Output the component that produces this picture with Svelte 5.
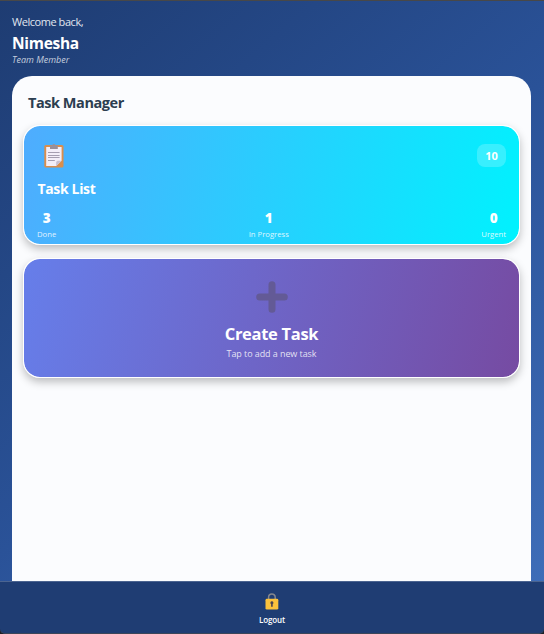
<script>
  const stats = [
    { value: 3, label: 'Done', name: 'done' },
    { value: 1, label: 'In Progress', name: 'progress' },
    { value: 0, label: 'Urgent', name: 'urgent' }
  ];
</script>

<div class="app">
  <header>
    <div class="welcome">Welcome back,</div>
    <div class="name">Nimesha</div>
    <div class="role">Team Member</div>
  </header>

  <main>
    <h1>Task Manager</h1>
    <section class="card list">
      <div class="top">
        <svg class="clip" width="20" height="24" viewBox="0 0 20 24">
          <rect x="0.3" y="1" width="19.2" height="22.6" rx="1.6" fill="#d98e4d" />
          <path d="M2.2 3H17.6V16.8L12.2 22H2.2Z" fill="#f3eef8" />
          <path d="M12.2 22V18.4Q12.2 16.8 13.8 16.8H17.6Z" fill="#c9bfd0" />
          <path d="M6 1.5H8Q8.4 0 9.9 0T11.8 1.5H13.8V5H6Z" fill="#998f99" />
          <path d="M4 8.5H15.6M4 11.5H15.6M4 13.5H15.6M4 16.5H10.8" stroke="#a59eb0" stroke-width="1" />
        </svg>
        <div class="badge">10</div>
      </div>
      <h2>Task List</h2>
      <div class="stats">
        {#each stats as s}
          <div class="stat {s.name}">
            <b>{s.value}</b>
            <small>{s.label}</small>
          </div>
        {/each}
      </div>
    </section>

    <section class="card create">
      <svg width="32" height="32" viewBox="0 0 32 32">
        <path d="M16 3.7V28.3M3.7 16H28.3" stroke="#635a96" stroke-width="7" stroke-linecap="round" />
      </svg>
      <h3>Create Task</h3>
      <p>Tap to add a new task</p>
    </section>
  </main>

  <footer>
    <svg width="14" height="17" viewBox="0 0 14 17">
      <path d="M3.6 7V4.2A3.3 3.3 0 0 1 10.2 4.2V7" fill="none" stroke="#85878d" stroke-width="1.5" />
      <rect x="0.5" y="5.8" width="12.8" height="10.8" rx="1.4" fill="#fbc23c" />
      <path d="M6.9 8.3A1.5 1.5 0 0 1 7.7 11.1V13.8H6.1V11.1A1.5 1.5 0 0 1 6.9 8.3Z" fill="#4b4450" />
    </svg>
    <span>Logout</span>
  </footer>
</div>

<style>
  .app {
    box-sizing: border-box;
    width: 544px;
    height: 634px;
    border-top: 1px solid #484848;
    display: flex;
    flex-direction: column;
    overflow: hidden;
    font-family: 'Open Sans', 'Noto Sans', sans-serif;
    color: #fff;
    background: linear-gradient(139deg, #1e3c72 0%, #2a5298 50%, #4070bb 100%);
  }
  h1, h2, h3, p { margin: 0; }
  header {
    box-sizing: border-box;
    height: 75px;
    padding: 13px 12px 0;
    white-space: nowrap;
  }
  .welcome { font-size: 11px; line-height: 16px; letter-spacing: -0.45px; color: #e1e6ef; }
  .name { font-size: 15.5px; line-height: 18px; margin-top: 4px; font-weight: 700; letter-spacing: -0.3px; }
  .role { font-size: 9px; line-height: 12px; margin-top: 2px; font-style: italic; color: #c5cede; }
  main {
    box-sizing: border-box;
    flex: 1;
    margin: 0 13px 0 12px;
    padding: 16px 11px 0;
    border-radius: 20px 20px 0 0;
    background: #fbfcfe;
  }
  h1 {
    margin-left: 5px;
    font-size: 14.5px;
    line-height: 22px;
    font-weight: 700;
    letter-spacing: -0.45px;
    color: #2c3e50;
  }
  .card {
    box-sizing: border-box;
    height: 120px;
    border: 1px solid rgba(255, 255, 255, 0.85);
    border-radius: 17px;
    background-clip: padding-box;
    box-shadow: 0 4px 9px rgba(0, 0, 0, 0.25);
  }
  .list {
    margin-top: 11px;
    padding: 18px 13px 0;
    background-image: linear-gradient(103.5deg, #4facfe 0%, #00f2fe 100%);
  }
  .top { display: flex; justify-content: space-between; height: 34px; }
  .clip { margin-left: 7px; }
  .badge {
    width: 29px;
    height: 23px;
    border-radius: 8px;
    background: rgba(255, 255, 255, 0.2);
    font-size: 11px;
    line-height: 23px;
    font-weight: 700;
    text-align: center;
  }
  h2 { margin-left: 0.5px; font-size: 14px; line-height: 22px; font-weight: 700; letter-spacing: -0.35px; }
  .stats { display: flex; justify-content: space-between; margin-top: 9px; }
  .stat { display: flex; flex-direction: column; align-items: center; }
  .stat b { font-size: 13.5px; line-height: 18px; font-weight: 800; }
  .stat small { font-size: 7.7px; line-height: 12px; margin-top: 1px; color: rgba(255, 255, 255, 0.85); }
  .create {
    margin-top: 13px;
    padding-top: 22px;
    display: flex;
    flex-direction: column;
    align-items: center;
    background-image: linear-gradient(103.5deg, #667eea 0%, #764ba2 100%);
  }
  .create svg { flex: none; }
  h3 { font-size: 16.5px; line-height: 24px; margin-top: 9px; font-weight: 700; letter-spacing: -0.3px; }
  .create p { font-size: 9px; line-height: 14px; margin-top: 1px; letter-spacing: -0.08px; color: rgba(255, 255, 255, 0.82); }
  footer {
    box-sizing: border-box;
    height: 53px;
    padding-top: 11px;
    border-top: 1px solid #4b6490;
    border-bottom: 1px solid #3b4659;
    border-radius: 0 0 5px 5px;
    background: #1f3d73;
    box-shadow: 0 8px 0 8px #1c2028;
    clip-path: inset(0);
    display: flex;
    flex-direction: column;
    align-items: center;
  }
  footer span { font-size: 8px; line-height: 12px; margin-top: 4px; font-weight: 600; letter-spacing: -0.1px; }
</style>
